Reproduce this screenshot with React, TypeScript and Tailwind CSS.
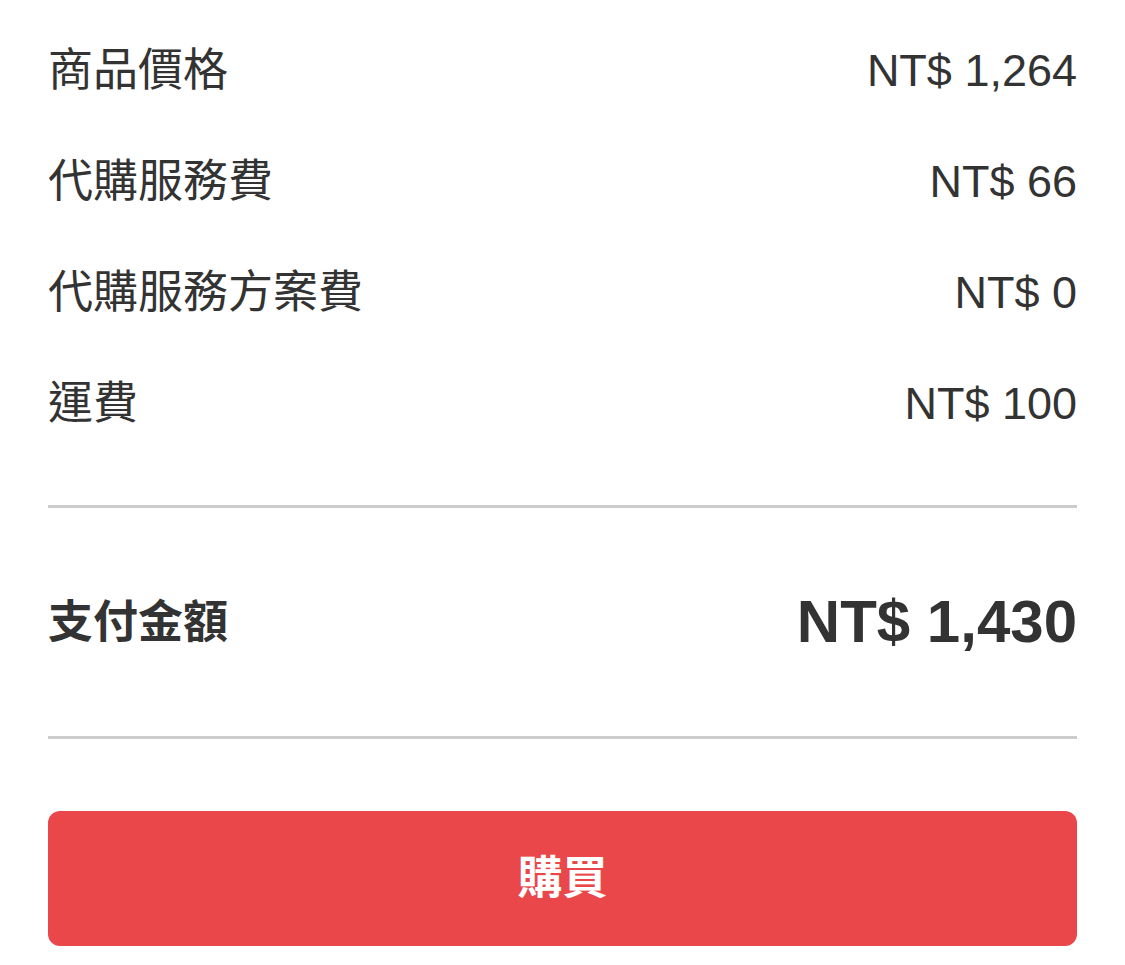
import React from "react";

const rows = [
  { label: "商品價格", value: "NT$ 1,264" },
  { label: "代購服務費", value: "NT$ 66" },
  { label: "代購服務方案費", value: "NT$ 0" },
  { label: "運費", value: "NT$ 100" },
];

const font = {
  fontFamily: '"Liberation Sans", "Noto Sans CJK TC", sans-serif',
};

export default function App() {
  return (
    <div
      className="w-[1125px] h-[965px] bg-white px-12 pt-[15px] text-[#333333] font-['Liberation_Sans','Noto_Sans_CJK_TC',sans-serif]"
    >
      <div className="flex flex-col">
        {rows.map((r) => (
          <div
            key={r.label}
            className="h-[111px] flex items-center justify-between text-[45px] leading-none"
          >
            <span>{r.label}</span>
            <span>{r.value}</span>
          </div>
        ))}
      </div>
      <div className="mt-[46px] h-[3px] bg-[#cccccc]" />
      <div className="h-[228px] flex items-center justify-between">
        <span className="text-[45px] leading-none font-bold">支付金額</span>
        <span className="text-[60px] leading-none font-bold">NT$ 1,430</span>
      </div>
      <div className="h-[3px] bg-[#cccccc]" />
      <button className="mt-[72px] w-full h-[135px] rounded-xl bg-[#e9474a] text-white text-[45px] font-bold leading-none flex items-center justify-center">
        購買
      </button>
    </div>
  );
}
